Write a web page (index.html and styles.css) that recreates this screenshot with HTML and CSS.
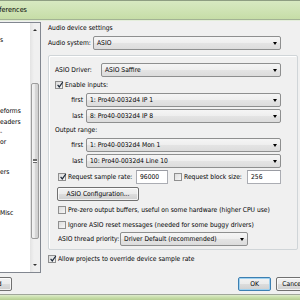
FILE: index.html
```html
<!DOCTYPE html>
<html lang="en">
<head>
    <meta charset="UTF-8">
    <title>Preferences</title>
    <link rel="stylesheet" href="styles.css">
</head>
<body>
    <div class="window">
        <div class="titlebar"><span class="title">Preferences</span></div>

        <div class="dialog">
            <div class="content">
                <!-- Sol ağaç listesi -->
                <div class="tree">
                    <ul class="tree-items">
                        <li>s</li>
                        <li></li>
                        <li></li>
                        <li></li>
                        <li></li>
                        <li></li>
                        <li></li>
                        <li>eforms</li>
                        <li>eaders</li>
                        <li>-</li>
                        <li>or</li>
                        <li></li>
                        <li></li>
                        <li>ers</li>
                        <li></li>
                        <li></li>
                        <li></li>
                        <li>Misc</li>
                    </ul>
                    <div class="scrollbar">
                        <div class="sb-btn sb-up"><span class="arrow-up"></span></div>
                        <div class="sb-track sb-track-top"></div>
                        <div class="sb-thumb"><span class="grip"></span></div>
                        <div class="sb-track sb-track-bottom"></div>
                        <div class="sb-btn sb-down"><span class="arrow-down"></span></div>
                    </div>
                </div>

                <!-- Ses aygıtı ayarları -->
                <div class="settings">
                    <div class="heading">Audio device settings</div>
                    <div class="row system-row">
                        <span class="label system-label">Audio system:</span>
                        <div class="combo">ASIO</div>
                    </div>

                    <div class="group">
                        <div class="row driver-row">
                            <span class="label driver-label">ASIO Driver:</span>
                            <div class="combo">ASIO Saffire</div>
                        </div>
                        <div class="check-row inputs-row">
                            <span class="check checked"><svg viewBox="0 0 8 8"><path d="M1.6 3.8 L3.3 5.9 L6.8 1"/></svg></span>
                            <span>Enable inputs:</span>
                        </div>
                        <div class="row range-row first-in">
                            <span class="range-label">first</span>
                            <div class="combo">1: Pro40-0032d4 IP 1</div>
                        </div>
                        <div class="row range-row">
                            <span class="range-label">last</span>
                            <div class="combo">8: Pro40-0032d4 IP 8</div>
                        </div>
                        <div class="section-label">Output range:</div>
                        <div class="row range-row first-out">
                            <span class="range-label">first</span>
                            <div class="combo">1: Pro40-0032d4 Mon 1</div>
                        </div>
                        <div class="row range-row">
                            <span class="range-label">last</span>
                            <div class="combo">10: Pro40-0032d4 Line 10</div>
                        </div>
                        <div class="row rate-row">
                            <div class="check-row rate-check">
                                <span class="check checked"><svg viewBox="0 0 8 8"><path d="M1.6 3.8 L3.3 5.9 L6.8 1"/></svg></span>
                                <span>Request sample rate:</span>
                            </div>
                            <div class="field rate-field">96000</div>
                            <div class="check-row block-check">
                                <span class="check"></span>
                                <span>Request block size:</span>
                            </div>
                            <div class="field block-field">256</div>
                        </div>
                        <button class="btn config-btn">ASIO Configuration...</button>
                        <div class="check-row option-row prezero-row">
                            <span class="check"></span>
                            <span>Pre-zero output buffers, useful on some hardware (higher CPU use)</span>
                        </div>
                        <div class="check-row option-row ignore-row">
                            <span class="check"></span>
                            <span>Ignore ASIO reset messages (needed for some buggy drivers)</span>
                        </div>
                        <div class="row priority-row">
                            <span class="label priority-label">ASIO thread priority:</span>
                            <div class="combo priority-combo">Driver Default (recommended)</div>
                        </div>
                    </div>

                    <div class="check-row allow-row">
                        <span class="check checked"><svg viewBox="0 0 8 8"><path d="M1.6 3.8 L3.3 5.9 L6.8 1"/></svg></span>
                        <span>Allow projects to override device sample rate</span>
                    </div>
                </div>
            </div>

            <div class="footer">
                <button class="btn find-btn">Find</button>
                <div class="footer-right">
                    <button class="btn default-btn">OK</button>
                    <button class="btn">Cancel</button>
                </div>
            </div>
        </div>

        <div class="frame-bottom"></div>
    </div>
</body>
</html>
```

FILE: styles.css
```css
:root {
    --dialog-bg: #f0f0f0;
    --frame-green: #cbe1ae;
    --combo-border: #8e8f8f;
    --group-border: #d0d5d8;
}

* {
    box-sizing: border-box;
}

body {
    margin: 0;
    width: 300px;
    height: 300px;
    overflow: hidden;
    background: var(--dialog-bg);
    font-family: 'DejaVu Sans Condensed', 'DejaVu Sans', sans-serif;
    font-stretch: condensed;
    font-size: 6.7px;
    color: #000;
}

.window {
    display: flex;
    flex-direction: column;
    height: 300px;
}

.titlebar {
    flex: none;
    height: 20px;
    display: flex;
    align-items: center;
    background: linear-gradient(#d7e9c1, #d0e4b6 45%, #c6dda7);
    border-top: 1px solid #8e9e82;
    border-bottom: 1px solid #a3b394;
    box-shadow: 0 1px 0 #e4eedb;
}

.title {
    font-size: 7.2px;
    text-indent: -11px;
    white-space: nowrap;
    padding-bottom: 1px;
}

.dialog {
    flex: 1;
    display: flex;
    flex-direction: column;
    padding-top: 2px;
}

.content {
    display: flex;
    height: 251px;
}

/* Ağaç listesi */
.tree {
    width: 41px;
    flex: none;
    display: flex;
    background: #fff;
    border: 1px solid #828790;
    border-left: none;
}

.tree-items {
    list-style: none;
    margin: 0;
    padding: 12px 0 0 0;
    flex: 1;
    overflow: hidden;
}

.tree-items li {
    height: 10.2px;
    line-height: 10.2px;
    white-space: nowrap;
}

.scrollbar {
    width: 10px;
    flex: none;
    display: flex;
    flex-direction: column;
    background: linear-gradient(to right, #e3e3e3, #f0f0f0 40%, #f0f0f0);
}

.sb-btn {
    height: 14px;
    display: flex;
    align-items: center;
    justify-content: center;
}

.sb-track-top {
    height: 46px;
}

.sb-track-bottom {
    height: 19px;
}

.sb-thumb {
    height: 156px;
    margin: 0 1px;
    border: 1px solid #9c9c9c;
    border-radius: 2px;
    background: linear-gradient(to right, #f4f4f4, #e8e8e8 50%, #d8d8d8 50%, #d0d0d0);
    display: flex;
    align-items: center;
    justify-content: center;
}

.grip {
    width: 4px;
    height: 4px;
    border-top: 1px solid #6b6b6b;
    border-bottom: 1px solid #6b6b6b;
    background: linear-gradient(#fff 0 25%, #6b6b6b 25% 60%, #fff 60%);
}

.arrow-up {
    border-left: 2px solid transparent;
    border-right: 2px solid transparent;
    border-bottom: 2px solid #333;
}

.arrow-down {
    border-left: 2px solid transparent;
    border-right: 2px solid transparent;
    border-top: 2px solid #333;
}

/* Sağ ayarlar paneli */
.settings {
    flex: 1;
    padding: 1px 2px 0 7px;
}

.heading {
    height: 10px;
    line-height: 10px;
    white-space: nowrap;
}

.row {
    display: flex;
    align-items: center;
    height: 14px;
    white-space: nowrap;
}

.system-row {
    margin-top: 3px;
    padding-right: 17px;
}

.system-label {
    width: 45px;
}

.label {
    flex: none;
}

.combo {
    position: relative;
    flex: 1;
    height: 14px;
    line-height: 12px;
    padding-left: 3px;
    border: 1px solid var(--combo-border);
    border-radius: 2px;
    background: linear-gradient(#f5f5f5, #eeeeee 50%, #e4e4e4 50%, #dcdcdc);
    white-space: nowrap;
    overflow: hidden;
}

.combo::after {
    content: "";
    position: absolute;
    right: 3px;
    top: 5px;
    border-left: 2.5px solid transparent;
    border-right: 2.5px solid transparent;
    border-top: 3px solid #000;
}

.group {
    margin-top: 5px;
    padding: 7px 16px 1px 6px;
    border: 1px solid var(--group-border);
    border-radius: 2px;
    box-shadow: inset 1px 1px 0 #fff;
    height: 195px;
}

.driver-label {
    width: 46px;
}

.check-row {
    display: flex;
    align-items: center;
    height: 10px;
    white-space: nowrap;
}

.check {
    width: 8px;
    height: 8px;
    flex: none;
    margin-right: 2px;
    border: 1px solid #8f8f8f;
    background: linear-gradient(135deg, #dcdcdc, #f6f6f6);
    display: flex;
}

.check svg {
    width: 8px;
    height: 8px;
    margin: -1px 0 0 -0.5px;
    overflow: visible;
}

.check path {
    fill: none;
    stroke: #1e2a3a;
    stroke-width: 1.2;
}

.inputs-row {
    margin-top: 3px;
}

.range-row {
    margin-top: 2px;
}

.range-row.first-in,
.range-row.first-out {
    margin-top: 3px;
}

.range-label {
    width: 31px;
    flex: none;
    text-align: right;
    padding-right: 3px;
}

.section-label {
    margin-top: 2px;
    height: 10px;
    line-height: 10px;
}

.rate-row {
    margin-top: 2px;
    padding-left: 3px;
}

.rate-check {
    width: 78px;
    flex: none;
}

.field {
    height: 14px;
    line-height: 12px;
    padding-left: 3px;
    border: 1px solid #abadb3;
    border-top-color: #9a9ca3;
    background: #fff;
    flex: none;
}

.rate-field {
    width: 32px;
}

.block-check {
    width: 73px;
    margin-left: 6px;
    flex: none;
}

.block-field {
    width: 34px;
}

.btn {
    height: 14px;
    padding: 0;
    font-family: inherit;
    font-stretch: inherit;
    font-size: inherit;
    color: #000;
    border: 1px solid #707070;
    border-radius: 2px;
    background: linear-gradient(#f2f2f2, #ebebeb 50%, #dddddd 50%, #cfcfcf);
    box-shadow: inset 0 0 0 1px rgba(255, 255, 255, 0.7);
}

.config-btn {
    display: block;
    width: 82px;
    margin: 3px 0 0 2px;
}

.option-row {
    padding-left: 3px;
}

.prezero-row {
    margin-top: 4px;
}

.ignore-row {
    margin-top: 5px;
}

.priority-row {
    margin-top: 2px;
    padding-left: 3px;
}

.priority-label {
    width: 62px;
}

.priority-combo {
    flex: none;
    width: 128px;
}

.allow-row {
    margin-top: 4px;
}

/* Alt butonlar */
.footer {
    flex: 1;
    display: flex;
    align-items: flex-start;
    padding-top: 4px;
    border-bottom: 1px solid #a0a79a;
}

.find-btn {
    width: 33px;
    margin-left: -21px;
}

.footer-right {
    margin-left: auto;
    margin-right: -9px;
    display: flex;
    gap: 5px;
}

.footer-right .btn {
    width: 33px;
}

.default-btn {
    border-color: #3c7fb1;
    box-shadow: inset 0 0 0 1px #9fd1f0;
}

.frame-bottom {
    flex: none;
    height: 5px;
    background: linear-gradient(#dfecce, var(--frame-green) 40%, #b6cf93);
}
```
